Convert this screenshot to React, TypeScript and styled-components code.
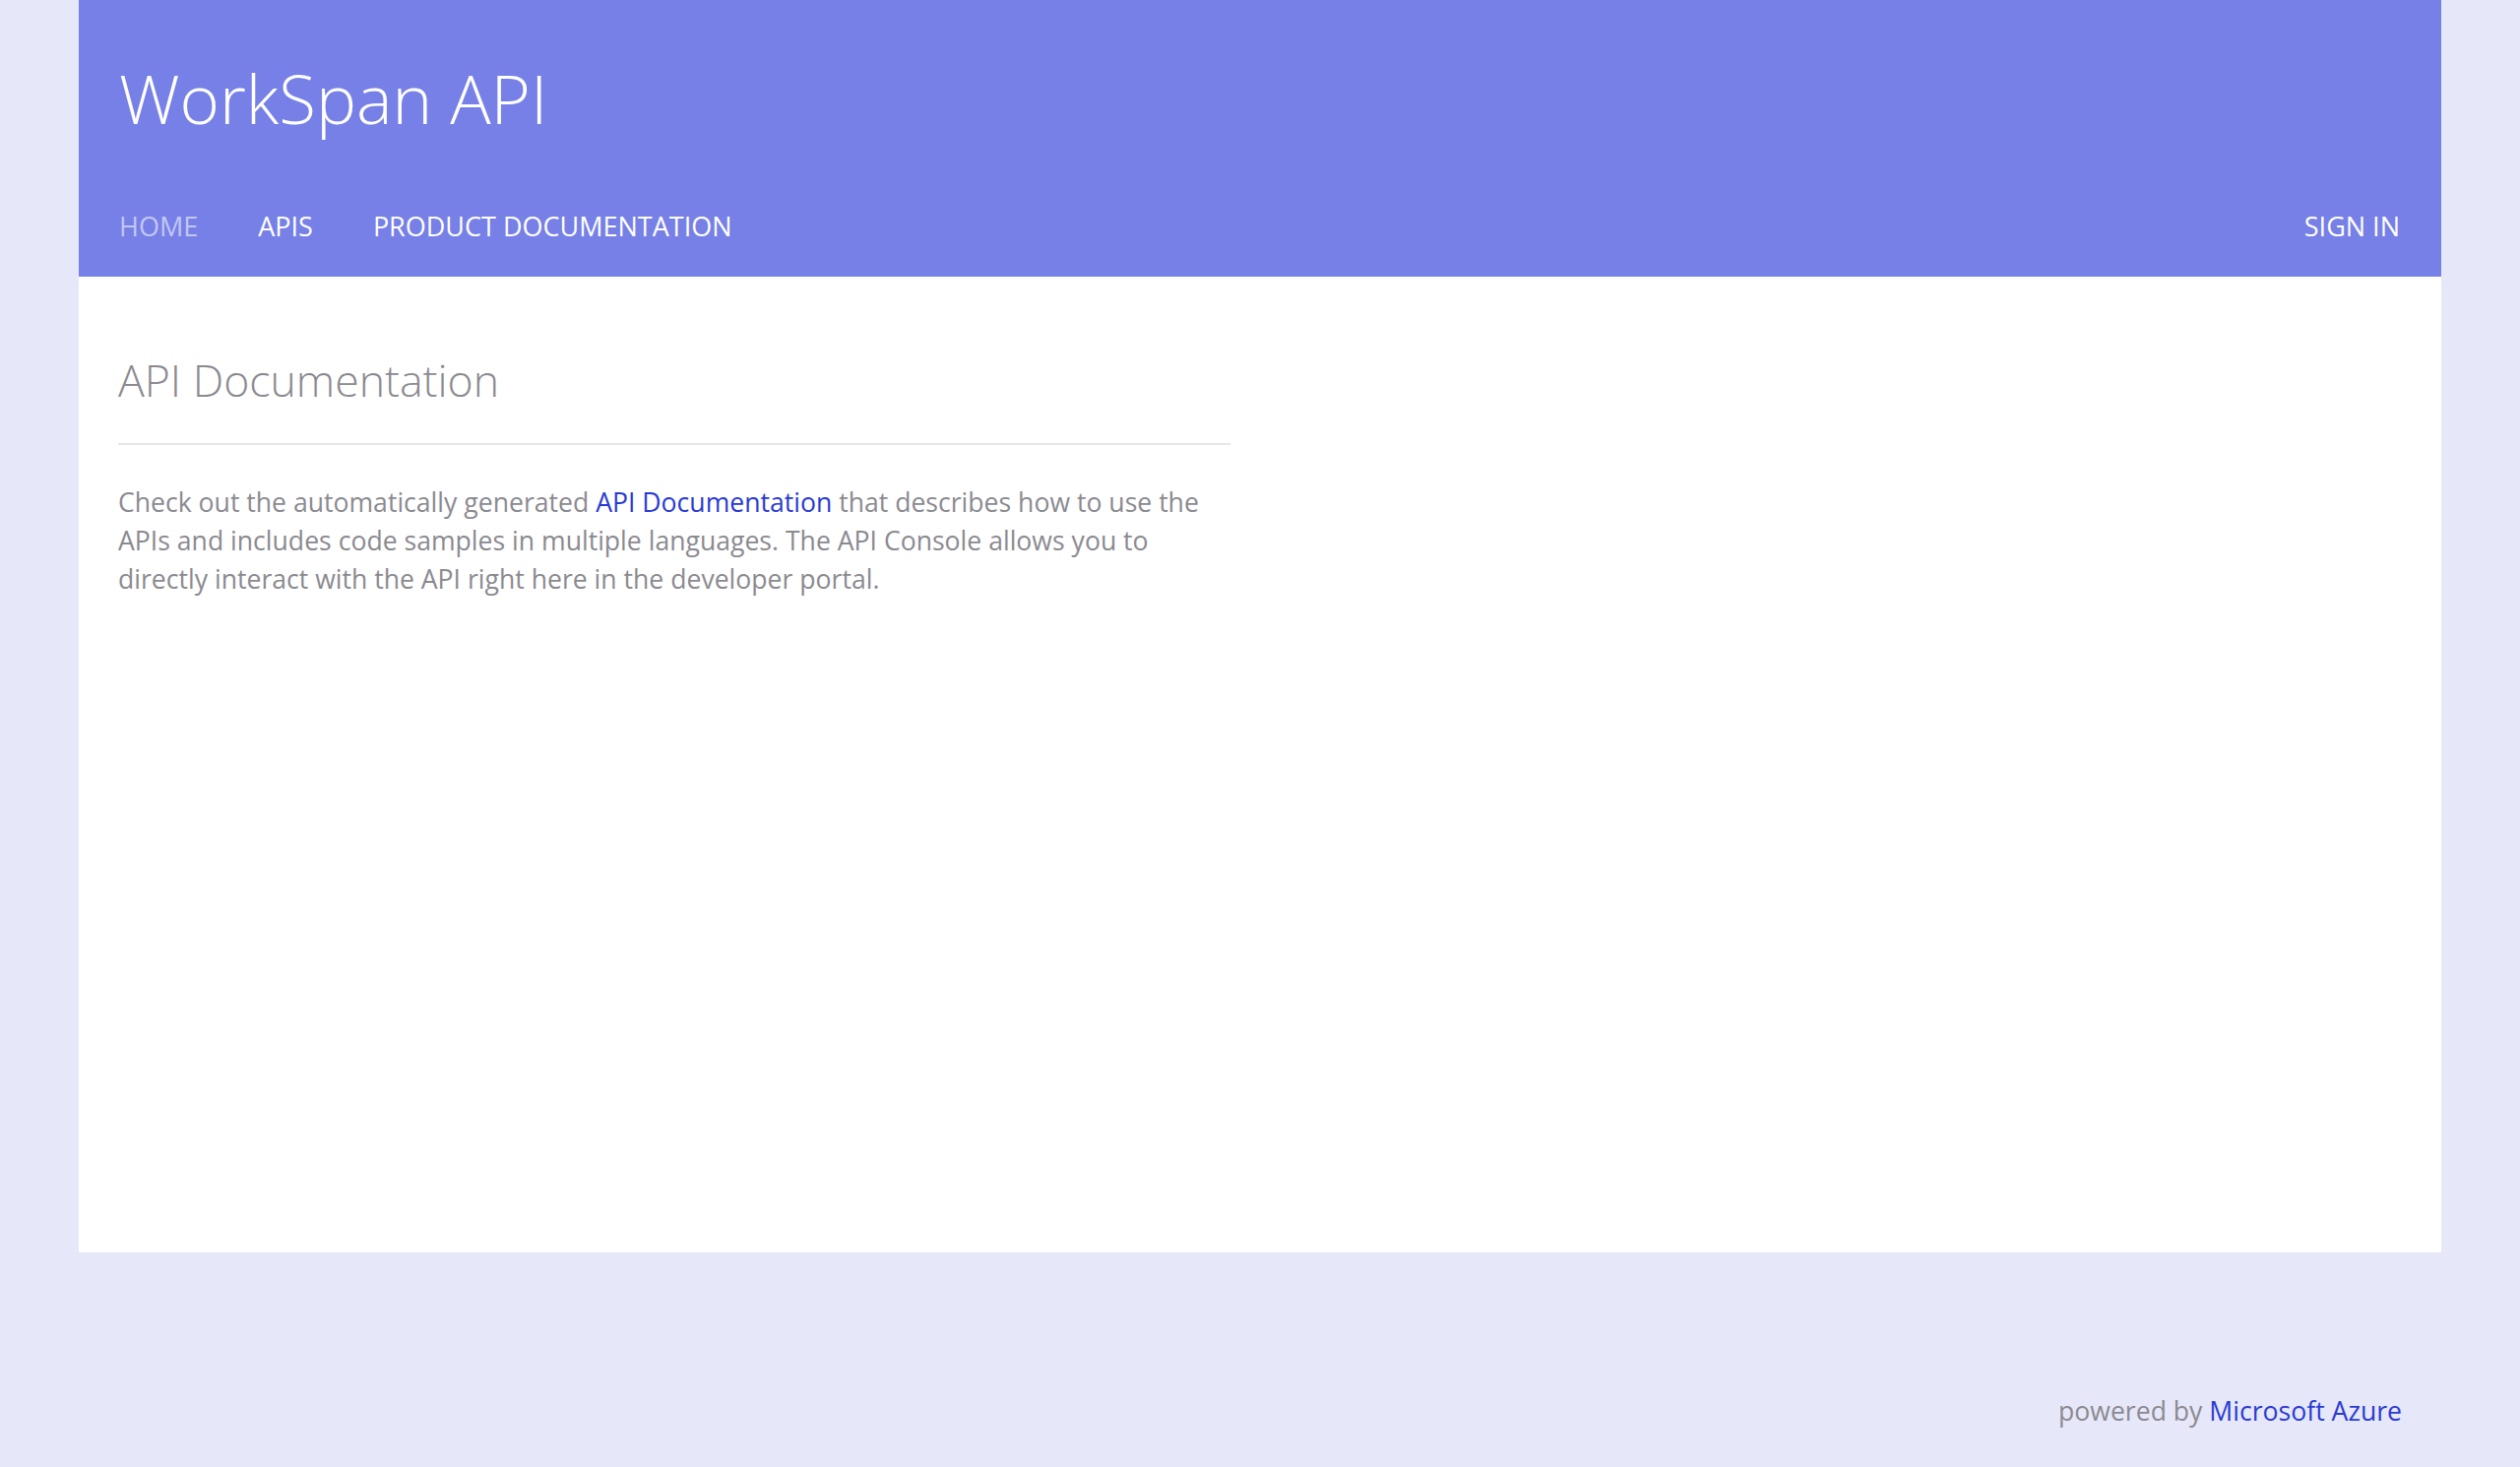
import React from "react";
import styled, { createGlobalStyle } from "styled-components";

const GlobalStyle = createGlobalStyle`
  html, body {
    margin: 0;
    padding: 0;
    background: #e6e8fa;
    font-family: "Open Sans", Lato, "Liberation Sans", sans-serif;
  }
  * { box-sizing: border-box; }
`;

const Page = styled.div`
  width: 2400px;
  margin: 0 auto;
  display: flex;
  flex-direction: column;
`;

const Header = styled.header`
  height: 281px;
  background: #7680e6;
  padding: 65px 42px 0 41px;
  display: flex;
  flex-direction: column;
`;

const Title = styled.h1`
  margin: 0;
  font-size: 69px;
  line-height: 1;
  font-weight: 300;
  color: #ffffff;
`;

const NavBar = styled.nav`
  margin-top: 82px;
  display: flex;
  justify-content: space-between;
  align-items: center;
`;

const NavList = styled.div`
  display: flex;
  gap: 61px;
`;

const NavLink = styled.a<{ $active?: boolean }>`
  font-size: 27px;
  line-height: 1;
  font-weight: 400;
  text-transform: uppercase;
  text-decoration: none;
  color: ${(p) => (p.$active ? "#c3c7f3" : "#ffffff")};
  cursor: pointer;
`;

const Main = styled.main`
  min-height: 991px;
  background: #ffffff;
  padding: 83px 40px 40px 40px;
  display: grid;
  grid-template-columns: 1130px 1fr;
  column-gap: 30px;
  align-content: start;
`;

const Section = styled.section`
  display: flex;
  flex-direction: column;
`;

const Heading = styled.h2`
  margin: 0;
  font-size: 44.6px;
  line-height: 1;
  font-weight: 300;
  color: #8b8a90;
`;

const Rule = styled.hr`
  margin: 41px 0 0 0;
  border: 0;
  height: 2px;
  background: #e6e6ec;
`;

const Paragraph = styled.p`
  margin: 39px 0 0 0;
  font-size: 26.6px;
  line-height: 39px;
  color: #8b8a90;
`;

const Link = styled.a`
  color: #2a3bd4;
  text-decoration: none;
`;

const Footer = styled.footer`
  height: 218px;
  padding: 148px 40px 0 40px;
  display: flex;
  justify-content: flex-end;
  align-items: flex-start;
`;

const FooterText = styled.div`
  font-size: 26.6px;
  line-height: 1;
  color: #8b8a90;
`;

export default function App() {
  return (
    <>
      <GlobalStyle />
      <Page>
        <Header>
          <Title>WorkSpan API</Title>
          <NavBar>
            <NavList>
              <NavLink $active>Home</NavLink>
              <NavLink>APIs</NavLink>
              <NavLink>Product Documentation</NavLink>
            </NavList>
            <NavLink>Sign in</NavLink>
          </NavBar>
        </Header>
        <Main>
          <Section>
            <Heading>API Documentation</Heading>
            <Rule />
            <Paragraph>
              Check out the automatically generated{" "}
              <Link>API Documentation</Link> that describes how to use the APIs
              and includes code samples in multiple languages. The API Console
              allows you to directly interact with the API right here in the
              developer portal.
            </Paragraph>
          </Section>
        </Main>
        <Footer>
          <FooterText>
            powered by <Link>Microsoft Azure</Link>
          </FooterText>
        </Footer>
      </Page>
    </>
  );
}
